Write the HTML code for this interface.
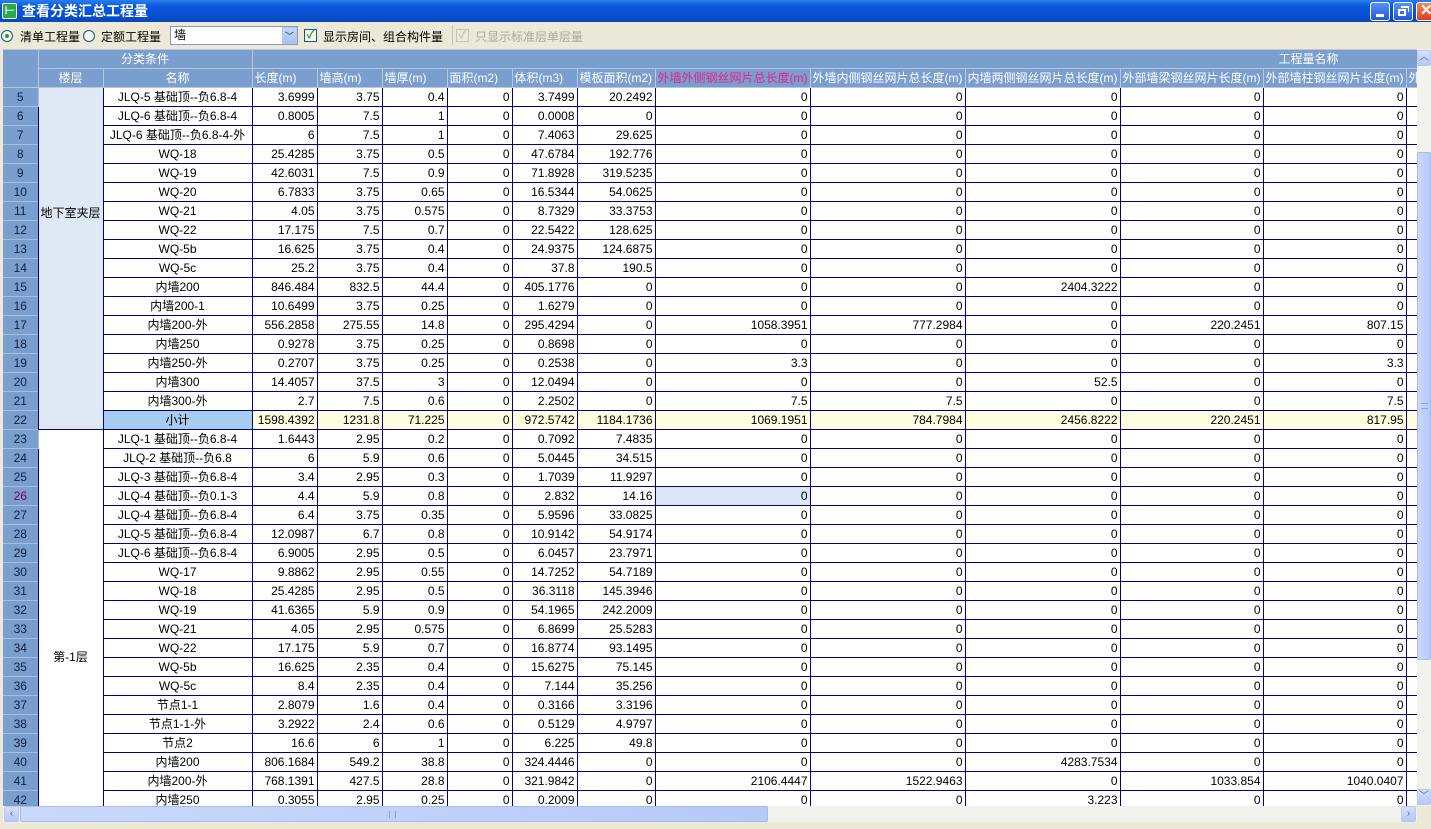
<!DOCTYPE html>
<html><head><meta charset="utf-8"><style>
*{box-sizing:border-box;margin:0;padding:0}
body{width:1431px;height:829px;overflow:hidden;background:#ece9d8;font-family:"Liberation Sans","Noto Sans CJK SC",sans-serif;font-size:12px;position:relative}
#title{position:absolute;left:0;top:0;width:1431px;height:22px;background:linear-gradient(#2a7ef0,#0a58dc 30%,#0650d0 70%,#0a46b8);color:#fff;font-weight:bold;font-size:14px;line-height:22px}
#ico{position:absolute;left:2px;top:3px;width:15px;height:16px;background:#2aa84a;border:1px solid #fff;border-radius:2px;color:#fff;font-size:11px;line-height:14px;text-align:center}
.tb{position:absolute;top:2px;width:20px;height:19px;border:1px solid #fff;border-radius:3px;background:linear-gradient(#5a90f8,#2458d8)}
#tool{position:absolute;left:0;top:22px;width:1431px;height:26px}
.t{position:absolute;top:6px;font-size:12px;color:#000}
.rad{position:absolute;top:8px;width:12px;height:12px;border:1px solid #1c5180;border-radius:50%;background:#f4f4ee}
.chk{position:absolute;top:7px;width:13px;height:13px;border:1px solid #1c5180;background:#f6f6f0;color:#21a121;font-size:11px;line-height:11px;text-align:center;font-weight:bold}
#combo{position:absolute;left:170px;top:4px;width:128px;height:19px;border:1px solid #7f9db9;background:#fff;padding-left:3px;line-height:16px}
#combo b{position:absolute;right:0;top:0;width:15px;height:17px;background:linear-gradient(#c8d8fc,#a8c0f4);border:1px solid #b8c8f0;color:#4d6185;font-size:9px;text-align:center;line-height:16px}
#grid{position:absolute;left:3px;top:49px;width:1414px;height:757px;overflow:hidden;background:#fff}
table{border-collapse:collapse;table-layout:fixed;width:1425px}
td{height:19px;padding:0 2px;white-space:nowrap;overflow:hidden;border:1px solid #000080;text-align:right;font-size:12px;line-height:17px;color:#000}
tr.h td{background:#7a9fcf;color:#fff;border:1px solid #b8c8dc;text-align:left}
td.rh{background:#7a9fcf;border:1px solid #a8bede;border-left:none;color:#102040;text-align:center}
td.n{text-align:center}
td.f{border-top:none;border-bottom:none;text-align:center;vertical-align:top}
tr.s td{background:#fffde0}
tr.s td.n{background:#a8ccf0}
tr.s td.rh{background:#7a9fcf}
#vs{position:absolute;left:1417px;top:49px;width:14px;height:757px;background:#f3f3ee}
#hs{position:absolute;left:3px;top:806px;width:1414px;height:16px;background:#f3f3ee}
.ab{position:absolute;width:15px;height:16px;border:1px solid #b8c8f0;border-radius:2px;background:linear-gradient(#d4e0fc,#b4c8f8);color:#4d6185;font-size:10px;text-align:center;line-height:14px}
.th{position:absolute;background:linear-gradient(90deg,#cad8fc,#b6caf8);border:1px solid #a8bcf0;border-radius:2px}
</style></head><body>
<div id="title"><div id="ico">⊢</div><span style="position:absolute;left:22px">查看分类汇总工程量</span>
<div class="tb" style="left:1370px"><div style="position:absolute;left:5px;top:11px;width:8px;height:3px;background:#fff"></div></div>
<div class="tb" style="left:1393px"><div style="position:absolute;left:4px;top:6px;width:8px;height:7px;border:2px solid #fff"></div><div style="position:absolute;left:7px;top:3px;width:8px;height:6px;border-top:2px solid #fff;border-right:1px solid #fff"></div></div>
<div class="tb" style="left:1416px;background:linear-gradient(#f08a60,#d8401c);color:#fff;font-size:15px;line-height:16px;padding-left:3px">✕</div>
</div>
<div id="tool">
<div class="rad" style="left:1px"><div style="position:absolute;left:3px;top:3px;width:4px;height:4px;border-radius:50%;background:#21a121"></div></div>
<span class="t" style="left:20px">清单工程量</span>
<div class="rad" style="left:83px"></div>
<span class="t" style="left:101px">定额工程量</span>
<div id="combo">墙<b>﹀</b></div>
<div class="chk" style="left:304px">✓</div>
<span class="t" style="left:323px">显示房间、组合构件量</span>
<div style="position:absolute;left:452px;top:3px;width:1px;height:20px;background:#c8c4b0"></div>
<div class="chk" style="left:456px;border-color:#c8c4b0;color:#c8c4b0;background:#ece9d8">✓</div>
<span class="t" style="left:475px;color:#aca899">只显示标准层单层量</span>
</div>
<div id="grid"><table>
<colgroup><col style="width:35px"><col style="width:65px"><col style="width:149px"><col style="width:65px"><col style="width:65px"><col style="width:65px"><col style="width:65px"><col style="width:65px"><col style="width:78px"><col style="width:155px"><col style="width:155px"><col style="width:155px"><col style="width:143px"><col style="width:143px"><col style="width:22px"></colgroup>
<tr class="h"><td rowspan="2" style="border-left:none"></td><td colspan="2" style="text-align:center">分类条件</td><td colspan="12" style="padding-left:1026px">工程量名称</td></tr>
<tr class="h"><td style="text-align:center">楼层</td><td style="text-align:center">名称</td><td>长度(m)</td><td>墙高(m)</td><td>墙厚(m)</td><td>面积(m2)</td><td>体积(m3)</td><td>模板面积(m2)</td><td style="color:#e8208a">外墙外侧钢丝网片总长度(m)</td><td>外墙内侧钢丝网片总长度(m)</td><td>内墙两侧钢丝网片总长度(m)</td><td>外部墙梁钢丝网片长度(m)</td><td>外部墙柱钢丝网片长度(m)</td><td>外</td></tr>
<tr><td class="rh">5</td><td class="f" rowspan="18" style="background:#dfe8f5;padding-top:117px">地下室夹层</td><td class="n">JLQ-5 基础顶--负6.8-4</td><td>3.6999</td><td>3.75</td><td>0.4</td><td>0</td><td>3.7499</td><td>20.2492</td><td>0</td><td>0</td><td>0</td><td>0</td><td>0</td><td></td></tr>
<tr><td class="rh">6</td><td class="n">JLQ-6 基础顶--负6.8-4</td><td>0.8005</td><td>7.5</td><td>1</td><td>0</td><td>0.0008</td><td>0</td><td>0</td><td>0</td><td>0</td><td>0</td><td>0</td><td></td></tr>
<tr><td class="rh">7</td><td class="n">JLQ-6 基础顶--负6.8-4-外</td><td>6</td><td>7.5</td><td>1</td><td>0</td><td>7.4063</td><td>29.625</td><td>0</td><td>0</td><td>0</td><td>0</td><td>0</td><td></td></tr>
<tr><td class="rh">8</td><td class="n">WQ-18</td><td>25.4285</td><td>3.75</td><td>0.5</td><td>0</td><td>47.6784</td><td>192.776</td><td>0</td><td>0</td><td>0</td><td>0</td><td>0</td><td></td></tr>
<tr><td class="rh">9</td><td class="n">WQ-19</td><td>42.6031</td><td>7.5</td><td>0.9</td><td>0</td><td>71.8928</td><td>319.5235</td><td>0</td><td>0</td><td>0</td><td>0</td><td>0</td><td></td></tr>
<tr><td class="rh">10</td><td class="n">WQ-20</td><td>6.7833</td><td>3.75</td><td>0.65</td><td>0</td><td>16.5344</td><td>54.0625</td><td>0</td><td>0</td><td>0</td><td>0</td><td>0</td><td></td></tr>
<tr><td class="rh">11</td><td class="n">WQ-21</td><td>4.05</td><td>3.75</td><td>0.575</td><td>0</td><td>8.7329</td><td>33.3753</td><td>0</td><td>0</td><td>0</td><td>0</td><td>0</td><td></td></tr>
<tr><td class="rh">12</td><td class="n">WQ-22</td><td>17.175</td><td>7.5</td><td>0.7</td><td>0</td><td>22.5422</td><td>128.625</td><td>0</td><td>0</td><td>0</td><td>0</td><td>0</td><td></td></tr>
<tr><td class="rh">13</td><td class="n">WQ-5b</td><td>16.625</td><td>3.75</td><td>0.4</td><td>0</td><td>24.9375</td><td>124.6875</td><td>0</td><td>0</td><td>0</td><td>0</td><td>0</td><td></td></tr>
<tr><td class="rh">14</td><td class="n">WQ-5c</td><td>25.2</td><td>3.75</td><td>0.4</td><td>0</td><td>37.8</td><td>190.5</td><td>0</td><td>0</td><td>0</td><td>0</td><td>0</td><td></td></tr>
<tr><td class="rh">15</td><td class="n">内墙200</td><td>846.484</td><td>832.5</td><td>44.4</td><td>0</td><td>405.1776</td><td>0</td><td>0</td><td>0</td><td>2404.3222</td><td>0</td><td>0</td><td></td></tr>
<tr><td class="rh">16</td><td class="n">内墙200-1</td><td>10.6499</td><td>3.75</td><td>0.25</td><td>0</td><td>1.6279</td><td>0</td><td>0</td><td>0</td><td>0</td><td>0</td><td>0</td><td></td></tr>
<tr><td class="rh">17</td><td class="n">内墙200-外</td><td>556.2858</td><td>275.55</td><td>14.8</td><td>0</td><td>295.4294</td><td>0</td><td>1058.3951</td><td>777.2984</td><td>0</td><td>220.2451</td><td>807.15</td><td></td></tr>
<tr><td class="rh">18</td><td class="n">内墙250</td><td>0.9278</td><td>3.75</td><td>0.25</td><td>0</td><td>0.8698</td><td>0</td><td>0</td><td>0</td><td>0</td><td>0</td><td>0</td><td></td></tr>
<tr><td class="rh">19</td><td class="n">内墙250-外</td><td>0.2707</td><td>3.75</td><td>0.25</td><td>0</td><td>0.2538</td><td>0</td><td>3.3</td><td>0</td><td>0</td><td>0</td><td>3.3</td><td></td></tr>
<tr><td class="rh">20</td><td class="n">内墙300</td><td>14.4057</td><td>37.5</td><td>3</td><td>0</td><td>12.0494</td><td>0</td><td>0</td><td>0</td><td>52.5</td><td>0</td><td>0</td><td></td></tr>
<tr><td class="rh">21</td><td class="n">内墙300-外</td><td>2.7</td><td>7.5</td><td>0.6</td><td>0</td><td>2.2502</td><td>0</td><td>7.5</td><td>7.5</td><td>0</td><td>0</td><td>7.5</td><td></td></tr>
<tr class="s"><td class="rh">22</td><td class="n">小计</td><td>1598.4392</td><td>1231.8</td><td>71.225</td><td>0</td><td>972.5742</td><td>1184.1736</td><td>1069.1951</td><td>784.7984</td><td>2456.8222</td><td>220.2451</td><td>817.95</td><td></td></tr>
<tr><td class="rh">23</td><td class="f" rowspan="20" style="padding-top:219px;border-top:1px solid #000080">第-1层</td><td class="n">JLQ-1 基础顶--负6.8-4</td><td>1.6443</td><td>2.95</td><td>0.2</td><td>0</td><td>0.7092</td><td>7.4835</td><td>0</td><td>0</td><td>0</td><td>0</td><td>0</td><td></td></tr>
<tr><td class="rh">24</td><td class="n">JLQ-2 基础顶--负6.8</td><td>6</td><td>5.9</td><td>0.6</td><td>0</td><td>5.0445</td><td>34.515</td><td>0</td><td>0</td><td>0</td><td>0</td><td>0</td><td></td></tr>
<tr><td class="rh">25</td><td class="n">JLQ-3 基础顶--负6.8-4</td><td>3.4</td><td>2.95</td><td>0.3</td><td>0</td><td>1.7039</td><td>11.9297</td><td>0</td><td>0</td><td>0</td><td>0</td><td>0</td><td></td></tr>
<tr><td class="rh" style="color:#800060">26</td><td class="n">JLQ-4 基础顶--负0.1-3</td><td>4.4</td><td>5.9</td><td>0.8</td><td>0</td><td>2.832</td><td>14.16</td><td style="background:#dde6f4">0</td><td>0</td><td>0</td><td>0</td><td>0</td><td></td></tr>
<tr><td class="rh">27</td><td class="n">JLQ-4 基础顶--负6.8-4</td><td>6.4</td><td>3.75</td><td>0.35</td><td>0</td><td>5.9596</td><td>33.0825</td><td>0</td><td>0</td><td>0</td><td>0</td><td>0</td><td></td></tr>
<tr><td class="rh">28</td><td class="n">JLQ-5 基础顶--负6.8-4</td><td>12.0987</td><td>6.7</td><td>0.8</td><td>0</td><td>10.9142</td><td>54.9174</td><td>0</td><td>0</td><td>0</td><td>0</td><td>0</td><td></td></tr>
<tr><td class="rh">29</td><td class="n">JLQ-6 基础顶--负6.8-4</td><td>6.9005</td><td>2.95</td><td>0.5</td><td>0</td><td>6.0457</td><td>23.7971</td><td>0</td><td>0</td><td>0</td><td>0</td><td>0</td><td></td></tr>
<tr><td class="rh">30</td><td class="n">WQ-17</td><td>9.8862</td><td>2.95</td><td>0.55</td><td>0</td><td>14.7252</td><td>54.7189</td><td>0</td><td>0</td><td>0</td><td>0</td><td>0</td><td></td></tr>
<tr><td class="rh">31</td><td class="n">WQ-18</td><td>25.4285</td><td>2.95</td><td>0.5</td><td>0</td><td>36.3118</td><td>145.3946</td><td>0</td><td>0</td><td>0</td><td>0</td><td>0</td><td></td></tr>
<tr><td class="rh">32</td><td class="n">WQ-19</td><td>41.6365</td><td>5.9</td><td>0.9</td><td>0</td><td>54.1965</td><td>242.2009</td><td>0</td><td>0</td><td>0</td><td>0</td><td>0</td><td></td></tr>
<tr><td class="rh">33</td><td class="n">WQ-21</td><td>4.05</td><td>2.95</td><td>0.575</td><td>0</td><td>6.8699</td><td>25.5283</td><td>0</td><td>0</td><td>0</td><td>0</td><td>0</td><td></td></tr>
<tr><td class="rh">34</td><td class="n">WQ-22</td><td>17.175</td><td>5.9</td><td>0.7</td><td>0</td><td>16.8774</td><td>93.1495</td><td>0</td><td>0</td><td>0</td><td>0</td><td>0</td><td></td></tr>
<tr><td class="rh">35</td><td class="n">WQ-5b</td><td>16.625</td><td>2.35</td><td>0.4</td><td>0</td><td>15.6275</td><td>75.145</td><td>0</td><td>0</td><td>0</td><td>0</td><td>0</td><td></td></tr>
<tr><td class="rh">36</td><td class="n">WQ-5c</td><td>8.4</td><td>2.35</td><td>0.4</td><td>0</td><td>7.144</td><td>35.256</td><td>0</td><td>0</td><td>0</td><td>0</td><td>0</td><td></td></tr>
<tr><td class="rh">37</td><td class="n">节点1-1</td><td>2.8079</td><td>1.6</td><td>0.4</td><td>0</td><td>0.3166</td><td>3.3196</td><td>0</td><td>0</td><td>0</td><td>0</td><td>0</td><td></td></tr>
<tr><td class="rh">38</td><td class="n">节点1-1-外</td><td>3.2922</td><td>2.4</td><td>0.6</td><td>0</td><td>0.5129</td><td>4.9797</td><td>0</td><td>0</td><td>0</td><td>0</td><td>0</td><td></td></tr>
<tr><td class="rh">39</td><td class="n">节点2</td><td>16.6</td><td>6</td><td>1</td><td>0</td><td>6.225</td><td>49.8</td><td>0</td><td>0</td><td>0</td><td>0</td><td>0</td><td></td></tr>
<tr><td class="rh">40</td><td class="n">内墙200</td><td>806.1684</td><td>549.2</td><td>38.8</td><td>0</td><td>324.4446</td><td>0</td><td>0</td><td>0</td><td>4283.7534</td><td>0</td><td>0</td><td></td></tr>
<tr><td class="rh">41</td><td class="n">内墙200-外</td><td>768.1391</td><td>427.5</td><td>28.8</td><td>0</td><td>321.9842</td><td>0</td><td>2106.4447</td><td>1522.9463</td><td>0</td><td>1033.854</td><td>1040.0407</td><td></td></tr>
<tr><td class="rh">42</td><td class="n">内墙250</td><td>0.3055</td><td>2.95</td><td>0.25</td><td>0</td><td>0.2009</td><td>0</td><td>0</td><td>0</td><td>3.223</td><td>0</td><td>0</td><td></td></tr>
</table></div>
<div id="vs"><div class="ab" style="left:0;top:1px;width:14px">︿</div><div class="th" style="left:0;top:103px;width:14px;height:508px"><div style="position:absolute;left:3px;top:250px;width:7px;height:6px;border-top:1px solid #8aa4e0;border-bottom:1px solid #8aa4e0"></div></div><div class="ab" style="left:0;top:740px;width:14px">﹀</div></div>
<div id="hs"><div class="ab" style="left:1px;top:0">‹</div><div class="th" style="left:17px;top:0;width:748px;height:16px"><div style="position:absolute;left:368px;top:4px;width:7px;height:7px;border-left:1px solid #8aa4e0;border-right:1px solid #8aa4e0"></div></div><div class="ab" style="left:1398px;top:0">›</div></div>
</body></html>
